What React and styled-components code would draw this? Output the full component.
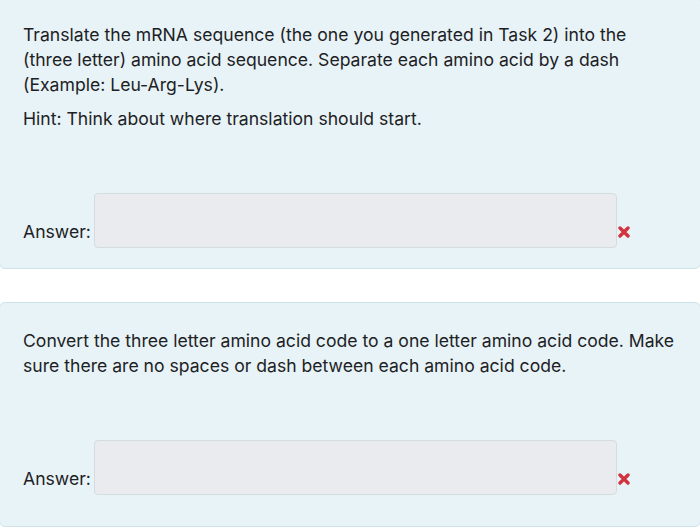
import styled, { createGlobalStyle } from "styled-components";

const Global = createGlobalStyle`
  body {
    margin: 0;
    background: #ffffff;
    font-family: Inter, "Liberation Sans", sans-serif;
    color: #1d2125;
  }
`;

const Page = styled.div`
  display: flex;
  flex-direction: column;
  gap: 33px;
  overflow: hidden;
  height: 531px;
`;

const Card = styled.section`
  background: #e7f3f6;
  border: 1px solid #cfe4ea;
  border-radius: 6px;
  padding: ${(p) => p.$pad};
  margin: ${(p) => p.$margin || "0"};
`;

const Text = styled.p`
  margin: 0 0 9px;
  max-width: ${(p) => p.$max || "none"};
  font-size: 17.6px;
  line-height: 25px;
`;

const AnswerRow = styled.div`
  display: flex;
  align-items: flex-end;
  margin-top: ${(p) => p.$top};
`;

const Label = styled.label`
  font-size: 17.6px;
  line-height: 25px;
  padding-bottom: 4px;
  margin-right: 3px;
`;

const Input = styled.input`
  width: 523px;
  height: 55px;
  box-sizing: border-box;
  background: #e9ebee;
  border: 1px solid #d5dce0;
  border-radius: 4px;
  outline: none;
`;

const Wrong = styled.svg`
  width: 12px;
  height: 12px;
  margin: 0 0 10px 1px;
  flex: none;
`;

function Cross() {
  return (
    <Wrong viewBox="0 0 12 12">
      <path
        d="M2 2 L10 10 M10 2 L2 10"
        stroke="#d3323f"
        strokeWidth="3.4"
        strokeLinecap="round"
      />
    </Wrong>
  );
}

function Question({ lines, pad, margin, top, max }) {
  return (
    <Card $pad={pad} $margin={margin}>
      {lines.map((l) => (
        <Text key={l} $max={max}>
          {l}
        </Text>
      ))}
      <AnswerRow $top={top}>
        <Label>Answer:</Label>
        <Input type="text" />
        <Cross />
      </AnswerRow>
    </Card>
  );
}

export default function App() {
  return (
    <>
      <Global />
      <Page>
        <Question
          margin="-4px -1px 0"
          pad="25px 23px 20px 23px"
          top="62px"
          max="625px"
          lines={[
            "Translate the mRNA sequence (the one you generated in Task 2) into the (three letter) amino acid sequence. Separate each amino acid by a dash (Example: Leu-Arg-Lys).",
            "Hint: Think about where translation should start.",
          ]}
        />
        <Question
          margin="0 -1px"
          pad="25px 23px 31px 23px"
          top="62px"
          lines={[
            "Convert the three letter amino acid code to a one letter amino acid code. Make sure there are no spaces or dash between each amino acid code.",
          ]}
        />
      </Page>
    </>
  );
}
